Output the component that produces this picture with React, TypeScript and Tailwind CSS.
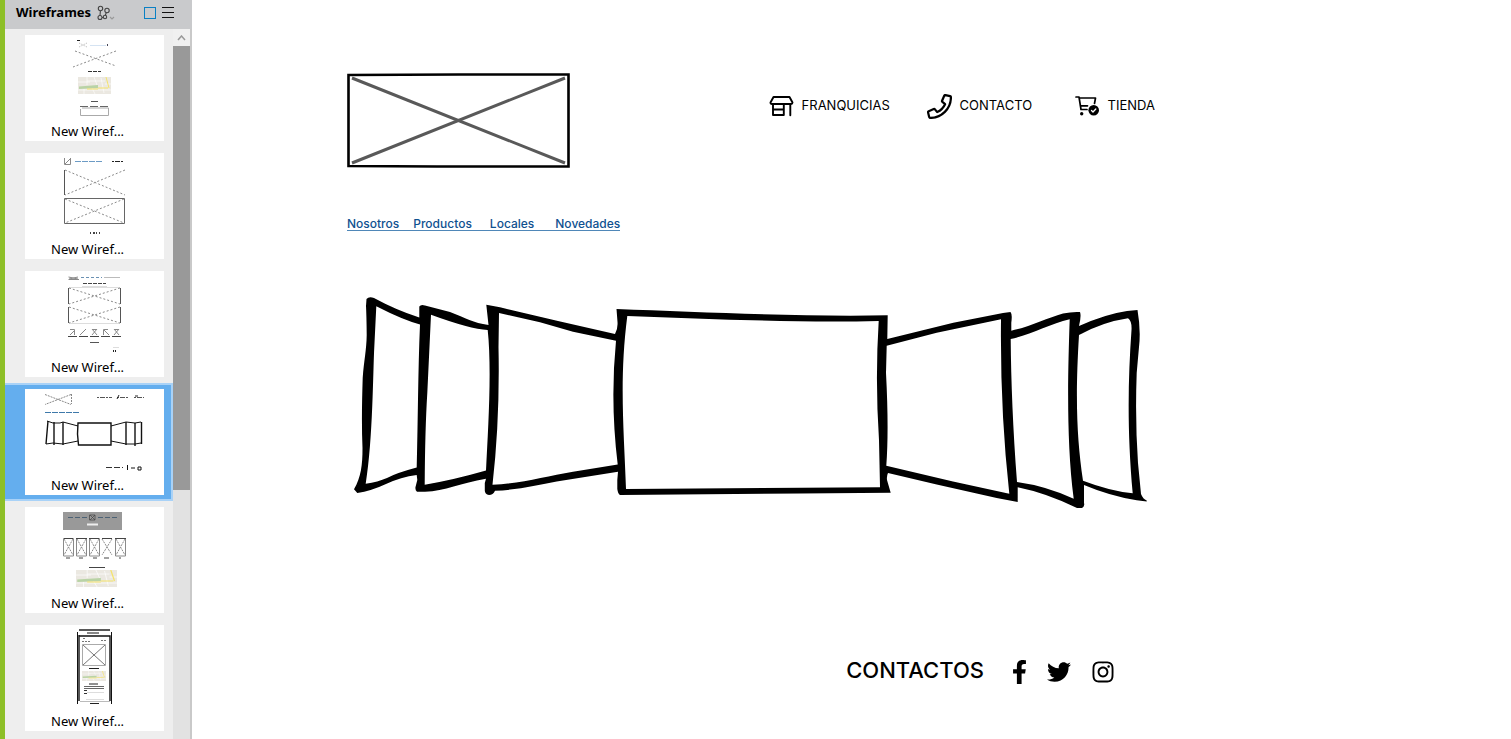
import { useState, type ReactNode } from "react";
import { FaFacebookF, FaInstagram, FaTwitter } from "react-icons/fa";

function MapPatch({ x, y, w, h }: { x: number; y: number; w: number; h: number }) {
  return (
    <svg x={x} y={y} width={w} height={h} viewBox="0 0 33 17" preserveAspectRatio="none" stroke="none">
      <rect width="33" height="17" fill="#ebe8e1" />
      <path d="M0 5H12M9 0V8M9 4H27M16 0L19 8M23 1L26 16M0 13H33M6 12V17M14 11L17 17M27 7H33" stroke="#fff" strokeWidth="0.6" fill="none" />
      <path d="M1 9.500L20 8V11L1 12Z" fill="#b9d3a5" />
      <path d="M9 12H20M20 11H30M28 0L31 11" stroke="#f5e36c" strokeWidth="1" fill="none" />
    </svg>
  );
}

const grey = "#8a8a8a";

const previews: ReactNode[] = [
  <g key="map" fill="none" stroke={grey}>
    <path d="M52 5.5H55" stroke="#222" />
    <path d="M54 8L62 12M62 8L54 12" strokeDasharray="1 1" stroke="#bbb" />
    <path d="M65 10.5H81" stroke="#d5e3f2" />
    <path d="M82.5 9V11" stroke="#445" />
    <path d="M50 16L91 31M91 16L48 32" strokeDasharray="2 2" />
    <path d="M63 36.5H76" stroke="#333" strokeDasharray="4 1" />
    <MapPatch x={53} y={42} w={33} h={17} />
    <path d="M66 66.5H73" stroke="#555" />
    <path d="M55 71.5H84" stroke="#666" strokeDasharray="8 2" />
    <path d="M55.5 74V80.5H83.5V73H57" stroke="#aaa" />
  </g>,
  <g key="two" fill="none" stroke={grey}>
    <path d="M39.5 5V11.5H45.5V5M40 11L45 6" />
    <path d="M50 8.5H78" stroke="#6c9bc5" strokeDasharray="6 1" />
    <path d="M87 8.5H98" stroke="#222" strokeDasharray="2 1 5 1" />
    <path d="M39.5 17V42" stroke="#555" />
    <path d="M40 17L100 42M100 17L40 42M40 46L99 70M99 46L40 70" strokeDasharray="2 2" />
    <path d="M39.5 45.5H99.5V70.5H39.5Z" stroke="#666" />
    <path d="M65 80H75" stroke="#444" strokeWidth="2" strokeDasharray="1 2 2 1" />
  </g>,
  <g key="gallery" fill="none" stroke={grey}>
    <path d="M43.5 6L53 8M53 6L44 8M43.5 8.5H54" />
    <path d="M56 6.5H77" stroke="#6b91b3" strokeDasharray="3 2" />
    <path d="M79 6.5H95" stroke="#bbb" />
    <path d="M58 12.5H81" stroke="#444" strokeDasharray="4 1" />
    <path d="M57 15.5H82M44 16.5H95M44 52.5H95" stroke="#ddd" />
    <path d="M43.5 17V33M95.5 17V33M43.5 36V52M95.5 36V52" stroke="#555" />
    <path d="M44 17L95 33M95 17L44 33M44 36L95 52M95 36L44 52" strokeDasharray="2 2" />
    <path d="M45 64L50 59M55 64L61 58M67 58L72 64M72 58L67 64M79 59L84 64M89 58L94 64M94 58L89 64" />
    <path d="M45 58.5H49.5V64M67 58.5H72M78.5 64V58.5H83M89 58.5H94" />
    <path d="M43 65.5H52M54 65.5H63M65 65.5H74M76 65.5H85M87 65.5H96" stroke="#444" />
    <path d="M65 71.5H74" stroke="#555" />
    <path d="M88 76.5H94" stroke="#ddd" />
    <path d="M88 80H92" stroke="#222" strokeWidth="2" strokeDasharray="1 1" />
  </g>,
  <g key="carousel" fill="none" stroke="#111">
    <path d="M20 5.5L46 15.5M46 5.5L20 15.5M46.5 5V15" stroke="#888" strokeDasharray="2 1" />
    <path d="M72 8.5H87M92 8.5H103M109 8.5H119" stroke="#555" strokeDasharray="2 1 5 1" />
    <path d="M92 10L94 6M110 7H113" stroke="#222" />
    <path d="M20 23.5H54" stroke="#3e79aa" strokeDasharray="6 1" />
    <path d="M22 32L28 34L35 34L38 33L53 37M21 55L28 54L38 55L53 52M86 37L101 33L110 34L116 33M86 52L101 55L110 55L116 54" />
    <path d="M23 32L21 55M29 33V56M38 33V56M101 33V56M110 34V57M116.5 33V55" strokeWidth="1.4" />
    <path d="M53 34H86V56H53.5L52.5 45Z" strokeWidth="1.4" />
    <path d="M81 78.5H98" stroke="#333" strokeDasharray="6 2" />
    <path d="M102.5 76V81M106 79H110M113 78H116V81H113Z" />
  </g>,
  <g key="banner" fill="none" stroke={grey}>
    <path d="M38 5H97V23H38Z" fill="#999" stroke="none" />
    <path d="M43 10.5H62M73 10.5H92" stroke="#4c6275" strokeDasharray="5 2" />
    <path d="M64.5 8H70V13H64.5ZM65 8L70 13M70 8L65 13" stroke="#444" strokeWidth="0.7" />
    <path d="M62 17.5H73" stroke="#eee" strokeWidth="2" />
    <path d="M38.5 31.5H48.5V49H38.5ZM51.5 31.5H61.5V49H51.5ZM64.5 31.5H74.5V49H64.5ZM77.5 31.5H87M90.5 31.5H100.5V49H90.5Z" />
    <path d="M39 31.5H48M51 31.5H62M64 31.5H74M77 31.5H87M90 31.5H101" stroke="#444" />
    <path d="M39 32L48 48M48 32L39 48M52 32L61 48M61 32L52 48M65 32L74 48M74 32L65 48M77 32L87 48M87 32L77 48M91 32L100 48M100 32L91 48" strokeDasharray="2 1" />
    <path d="M41 51H45M54 51H58M68 51H72M79 51H84M94 51H96M64 60.5H80" stroke="#444" />
    <MapPatch x={51} y={63} w={41} h={17} />
  </g>,
  <g key="phone" fill="none" stroke="#111">
    <path d="M54 5H85" strokeWidth="1.4" />
    <path d="M52.5 7V79M86.5 7V79M62 8H74" />
    <path d="M54 11H85V76M54 10V76" strokeWidth="1.4" />
    <path d="M55 76.5H85" stroke="#bbb" />
    <path d="M58 13.5H61M57 16.5H65M76 15.5H81" stroke="#777" strokeDasharray="2 1" />
    <path d="M57.5 19.5H80.5V40.5H57.5Z" stroke="#aaa" />
    <path d="M58 20L80 40M80 20L58 40" stroke="#777" />
    <path d="M64 43.5H74M64 59H73M65 78.5H74" stroke="#222" />
    <MapPatch x={57} y={46} w={24} h={10} />
    <path d="M59 61.5H79M59 63.5H79" stroke="#666" />
    <path d="M59 65.5H62M59 68.5H62" stroke="#333" />
    <path d="M62 67.5H79M61 74.5H79" stroke="#ddd" />
  </g>,
];

function Sidebar() {
  const [selected, setSelected] = useState(3);
  return (
    <aside className="flex w-48 shrink-0 flex-col border-l-[5px] border-[#8dbf27] bg-[#eeeeee] font-['Noto_Sans','Open_Sans',sans-serif] text-[13px]">
      <header className="flex h-[29px] shrink-0 items-center bg-[#c9cacc] pr-[18px] pb-1 pl-[11px]">
        <h1 className="font-bold text-black">Wireframes</h1>
        <button aria-label="Branches" className="ml-1.5">
          <svg width="18" height="16" viewBox="0 0 18 16" fill="none" stroke="#444" strokeWidth="1.1">
            <circle cx="3.5" cy="3.5" r="2.2" />
            <circle cx="10" cy="5.5" r="2.2" />
            <circle cx="3" cy="12.5" r="2" />
            <circle cx="8" cy="12" r="1.7" />
            <path d="M3.4 5.7L3 10.5M9.3 7.6L8.3 10.3M5 12.5H6.3" />
            <path d="M13 12L15 14L17 12" stroke="#999" />
          </svg>
        </button>
        <button aria-label="Thumbnails" className="ml-auto size-3 border border-[#0a80c4]" />
        <button aria-label="List" className="ml-1.5">
          <svg width="12" height="13" viewBox="0 0 12 13" stroke="#111">
            <path d="M0 1.5H12M0 6.5H12M0 11.5H12" />
          </svg>
        </button>
      </header>
      <div className="flex min-h-0 flex-1">
        <ul className="flex-1 overflow-hidden">
          {previews.map((preview, i) => (
            <li key={i}>
              <button
                onClick={() => setSelected(i)}
                aria-pressed={selected === i}
                className={
                  "flex h-[118px] w-full border-y-2 border-r-2 py-1 pl-5 text-left " +
                  (selected === i ? "border-[#a9d2f7] bg-[#64aeee]" : "border-transparent")
                }
              >
                <span className="flex h-[106px] w-[139px] flex-col bg-white">
                  <svg width="139" height="87" viewBox="0 0 139 87" aria-hidden="true">
                    {preview}
                  </svg>
                  <span className="pl-[26px] leading-[18px] text-black">New Wiref...</span>
                </span>
              </button>
            </li>
          ))}
        </ul>
        <div className="flex w-[19px] flex-col border-r-2 border-[#c9c9c9] bg-[#e2e2e2]">
          <button aria-label="Scroll up" className="flex h-[17px] shrink-0 items-center justify-center bg-[#f0f0f0]">
            <svg width="9" height="6" viewBox="0 0 9 6" fill="none" stroke="#999" strokeWidth="1.5">
              <path d="M1 5L4.500 1L8 5" />
            </svg>
          </button>
          <div className="flex-1">
            <div className="h-[64%] bg-[#999999]" />
          </div>
        </div>
      </div>
    </aside>
  );
}

function StoreIcon() {
  return (
    <svg width="25" height="24" viewBox="0 0 25 24" fill="none" stroke="#000" strokeWidth="1.9" strokeLinejoin="round" strokeLinecap="round">
      <path d="M4.500 3H20.500L23.500 8.500Q23.500 10 22 10H3Q1.300 10 1.500 8.500Z" />
      <path d="M4 10V21H14.800V10M4 15.500H14.800M21.300 10V21.300" />
    </svg>
  );
}

function PhoneIcon() {
  return (
    <svg width="25" height="25" viewBox="-24 -24 560 560" fill="none" stroke="#000" strokeWidth="50" strokeLinejoin="round">
      <path d="M493.400 24.600l-104-24c-11.300-2.600-22.900 3.300-27.500 13.900l-48 112c-4.200 9.800-1.400 21.300 6.900 28l60.600 49.600c-36 76.700-98.900 140.500-177.200 177.200l-49.600-60.600c-6.800-8.300-18.200-11.100-28-6.900l-112 48C3.900 366.500-2 378.100.6 389.400l24 104C27.100 504.200 36.700 512 48 512c256.100 0 464-207.500 464-464 0-11.200-7.700-20.900-18.600-23.400z" />
    </svg>
  );
}

function CartIcon() {
  return (
    <svg width="25" height="24" viewBox="0 0 25 24" fill="none" stroke="#000" strokeWidth="1.7" strokeLinejoin="round" strokeLinecap="round">
      <path d="M1 3H4L6 15.500H12M4.300 4H20.500L19.500 9.500M5.300 11.800H12.500" />
      <circle cx="6.700" cy="19.800" r="1.700" fill="#000" stroke="none" />
      <circle cx="18.700" cy="16.300" r="5.300" fill="#000" stroke="none" />
      <path d="M16.500 16.500L18 18L20.800 15" stroke="#fff" strokeWidth="1.300" />
    </svg>
  );
}

const frames = [
  "M366.500 299Q369 296 374 298Q396 310 419.300 317.500V306.500Q421 304 425 305.500L450 312C466 318 473 323 488.500 325L486.300 304.700L500 307.300L558 321L615 334Q618 329 617.500 322L616.500 309C700 312 800 317 887.700 315.300L887.300 339L953.300 322.700L1003 313L1010.500 312Q1012.500 314 1011.300 322.700V330.700C1029 327 1047 318 1063 313.500Q1072 311.500 1080 312Q1081.500 316 1079 326Q1106 314 1127 311L1137.500 310Q1141 330 1139 347L1136.700 373Q1135 420 1138 463L1141 494Q1143 499 1146.700 500.500V501.500L1136.700 500.300Q1110 496 1084 485V503Q1085 506 1082 508H1077Q1046 493 1017.700 487.300V502L996.700 498L936.700 484.500L888 473Q886.500 476 887 480L890.700 492.700L800 493.500L620 495Q618 494 617.300 489V480L618 471.700L556.700 481.500C538 485 518 490 495 490.700Q493 495 489 495Q484.500 494 484.800 490V483L486 478.700C461 483 445 491 425 491.700H417Q415 490 415.500 487L417.300 480L416.700 475Q401 477 386 484Q371 491 357.300 493L354 489.300C361 477 362.500 465 362.500 448C361.500 425 362 400 362.700 378C364 360 366.500 350 366.700 335Q366.500 315 366 306Z",
  "M376.300 306.300Q403 320 420 324.500C418 370 418 420 416.700 467.500Q396 473 387 478Q378 482 365.700 483.700C373 440 373 370 374.300 347Z",
  "M431 314.700Q470 329 487.700 330C492 370 488 430 486 470.500Q453 480 424.700 484.700Q425 430 427.300 393Z",
  "M499 313L540 322.300L573 331.700L616 340.700Q610 402 617.700 464.500L573 471.700C546 476 520 484 492.500 484.700Q500 420 498.500 347Z",
  "M627.300 316C710 319 800 323 878.700 321Q875 380 879 440L880 487.300L626 489C624 430 619 380 627.300 316Z",
  "M886.700 345.700L936.700 332.700L1001 319.300Q1000 410 1009.300 493.700L953 481.500L886.300 465.700Q889 430 886 373Z",
  "M1010.700 339C1030 335 1050 324 1069.700 319.300C1068 370 1066 440 1073.700 498.700Q1046 486 1017 482C1013 430 1011 380 1010.700 339Z",
  "M1079 335Q1103 322 1128 318.300Q1132 321 1131.500 330C1128 380 1127 430 1132.700 493.300Q1110 491 1083 480.700C1077 440 1075 400 1079 335Z",
].join("");

export default function App() {
  return (
    <div className="flex h-screen overflow-hidden bg-white text-black">
      <Sidebar />
      <main className="min-w-0 flex-1 overflow-hidden pl-[155px] font-['Inter','Liberation_Sans',sans-serif]">
        <div className="w-full max-w-[808px] pt-[73px]">
          <header className="flex justify-between">
            <svg width="223" height="95" viewBox="0 0 223 95" fill="none" role="img" aria-label="Logo">
              <path d="M1.500 2L112 1.500L221.500 1.500V93.500L90 93.500L1.500 93Z" stroke="#000" strokeWidth="2.600" />
              <path d="M5 5L218 90M218 5L5 90" stroke="#595959" strokeWidth="3" />
            </svg>
            <nav className="mt-5 grid h-[26px] grid-cols-[158px_148px_auto] text-[13px]">
              <a href="#franquicias" className="flex items-center gap-2">
                <StoreIcon />
                FRANQUICIAS
              </a>
              <a href="#contacto" className="flex items-center gap-2">
                <PhoneIcon />
                CONTACTO
              </a>
              <a href="#tienda" className="flex items-center gap-2">
                <CartIcon />
                TIENDA
              </a>
            </nav>
          </header>
          <nav className="mt-12 flex h-[15px] w-fit border-b border-[#4f87b8] text-xs leading-4 font-medium text-[#0f5190]">
            <a href="#nosotros" className="pr-[14px]">Nosotros</a>
            <a href="#productos" className="pr-[18px]">Productos</a>
            <a href="#locales" className="pr-[21px]">Locales</a>
            <a href="#novedades">Novedades</a>
          </nav>
          <svg className="mt-[59px] w-full" viewBox="347 290 808 220" role="img" aria-label="Carrusel">
            <path d={frames} fillRule="evenodd" />
          </svg>
          <footer className="mt-[148px] flex items-center justify-end pr-10">
            <h2 className="mr-7 pb-1 text-[22px] leading-6 font-medium">CONTACTOS</h2>
            <a href="#facebook" aria-label="Facebook" className="mr-5">
              <FaFacebookF className="h-6 w-[15px]" />
            </a>
            <a href="#twitter" aria-label="Twitter" className="mr-5">
              <FaTwitter className="size-6" />
            </a>
            <a href="#instagram" aria-label="Instagram">
              <FaInstagram className="size-6" />
            </a>
          </footer>
        </div>
      </main>
    </div>
  );
}
